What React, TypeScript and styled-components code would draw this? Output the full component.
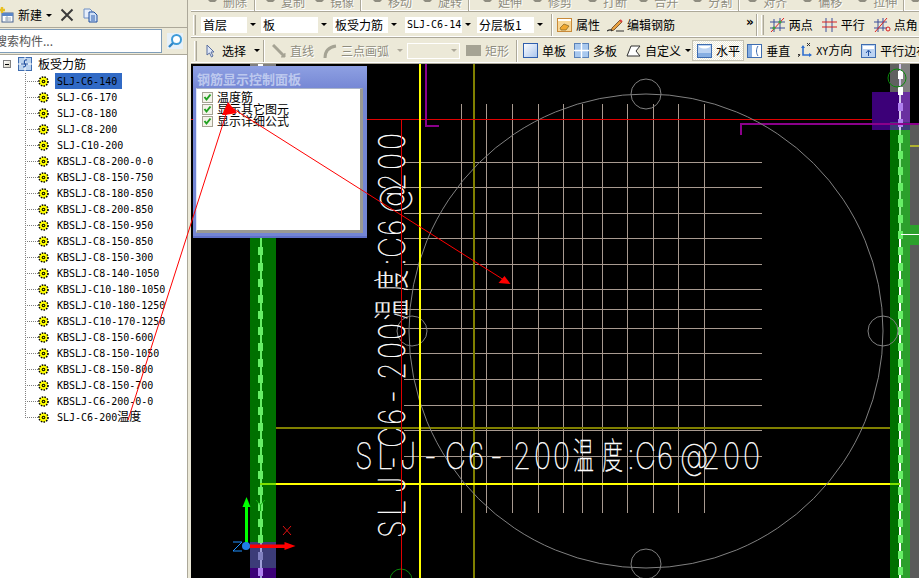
import React from 'react';
import styled, { createGlobalStyle } from 'styled-components';

const GlobalStyle = createGlobalStyle`
	html, body {
		margin: 0;
		padding: 0;
		background: #ece9d8;
		overflow: hidden;
	}
	* {
		box-sizing: border-box;
	}
`;

const UI_FONT = `"Noto Sans CJK SC", "Liberation Sans", sans-serif`;

const Page = styled.div`
	position: relative;
	display: flex;
	width: 919px;
	height: 578px;
	overflow: hidden;
	background: #ece9d8;
	font-family: ${UI_FONT};
	font-size: 12px;
	color: #000;
`;

/* left panel */
const SidePanel = styled.div`
	display: flex;
	flex-direction: column;
	width: 188px;
	border-right: 1px solid #aca899;
`;

const SideToolbar = styled.div`
	display: flex;
	align-items: center;
	height: 28px;
	padding-top: 3px;
	border-bottom: 1px solid #aca899;
	overflow: hidden;
`;

const SideLabel = styled.span`
	margin-left: 4px;
	font-size: 12px;
	line-height: 16px;
`;

const SearchRow = styled.div`
	display: flex;
	align-items: center;
	height: 27px;
	padding-bottom: 1px;
	border-bottom: 1px solid #aca899;
`;

const SearchBox = styled.div`
	width: 163px;
	height: 24px;
	margin-left: -1px;
	background: #fff;
	border: 1px solid #7f9db9;
	color: #555;
	font-size: 12px;
	line-height: 21px;
	white-space: nowrap;
	overflow: hidden;
`;

const SearchText = styled.span`
	display: block;
	margin-left: -5px;
`;

const SearchButton = styled.div`
	display: flex;
	margin-left: 5px;
`;

const Tree = styled.div`
	flex: 1;
	background: #fff;
	overflow: hidden;
`;

const RootRow = styled.div`
	display: flex;
	align-items: center;
	height: 18px;
	padding-left: 3px;
`;

const Expander = styled.span`
	display: flex;
	align-items: center;
	justify-content: center;
	width: 8px;
	height: 8px;
	border: 1px solid #808080;
	background: linear-gradient(135deg, #fff, #d8d4c4);
`;

const MinusMark = styled.span`
	width: 4px;
	height: 1px;
	background: #000;
`;

const RootIcon = styled.span`
	display: flex;
	margin-left: 7px;
`;

const RootLabel = styled.span`
	margin-left: 6px;
	font-size: 12px;
	line-height: 16px;
`;

const ItemList = styled.div`
	margin-left: 25px;
`;

const ItemRow = styled.div`
	display: flex;
	align-items: center;
	height: 16px;
`;

const Connector = styled.span<{ $last?: boolean }>`
	width: 13px;
	height: 16px;
	background:
		repeating-linear-gradient(to bottom, #808080 0 1px, transparent 1px 2px) 0 0 / 1px ${(p) => (p.$last ? 8 : 16)}px no-repeat,
		repeating-linear-gradient(to right, #808080 0 1px, transparent 1px 2px) 0 8px / 13px 1px no-repeat;
`;

const GearBox = styled.span`
	display: flex;
	width: 17px;
`;

const ItemLabel = styled.span<{ $selected?: boolean }>`
	height: 16px;
	padding: 0 5px 0 2px;
	background: ${(p) => (p.$selected ? '#316ac5' : 'transparent')};
	font-family: "DejaVu Sans Mono", "Noto Sans CJK SC", monospace;
	font-size: 10px;
	line-height: 17px;
	white-space: nowrap;
`;

const CjkPart = styled.span`
	font-family: ${UI_FONT};
	font-size: 12px;
	line-height: 0;
`;

const Splitter = styled.div`
	width: 3px;
	background: #ece9d8;
`;

/* right side */
const Main = styled.div`
	display: flex;
	flex: 1;
	flex-direction: column;
	min-width: 0;
`;

const ToolRow = styled.div<{ $height: number; $end?: boolean }>`
	display: flex;
	flex: none;
	align-items: ${(p) => (p.$end ? 'flex-end' : 'center')};
	height: ${(p) => p.$height}px;
	border-bottom: 1px solid #aca899;
	box-shadow: inset 0 -1px 0 #fff;
	overflow: hidden;
	white-space: nowrap;
`;

const Grip = styled.span<{ $ml: number }>`
	flex: none;
	width: 3px;
	height: 20px;
	margin-left: ${(p) => p.$ml}px;
	border-left: 1px solid #fff;
	border-right: 1px solid #aca899;
	background: #d8d4c4;
`;

const Sep = styled.span<{ $ml: number; $h?: number }>`
	flex: none;
	width: 2px;
	height: ${(p) => p.$h ?? 22}px;
	margin-left: ${(p) => p.$ml}px;
	border-left: 1px solid #aca899;
	border-right: 1px solid #fff;
`;

const Combo = styled.div<{ $ml: number; $w: number; $disabled?: boolean }>`
	display: flex;
	flex: none;
	width: ${(p) => p.$w}px;
	height: 16px;
	margin-left: ${(p) => p.$ml}px;
	background: ${(p) => (p.$disabled ? '#ece9d8' : '#fff')};
	border: ${(p) => (p.$disabled ? '1px solid #fff' : 'none')};
`;

const ComboText = styled.span`
	flex: 1;
	min-width: 0;
	padding-left: 2px;
	font-size: 12px;
	line-height: 16px;
	overflow: hidden;
`;

const ComboCode = styled(ComboText)`
	font-family: "DejaVu Sans Mono", monospace;
	font-size: 10px;
`;

const ComboArrow = styled.span`
	display: flex;
	flex: none;
	align-items: center;
	justify-content: center;
	width: 11px;
	background: #ece9d8;
`;

const Caret = styled.span<{ $ml?: number; $muted?: boolean }>`
	flex: none;
	width: 0;
	height: 0;
	margin-left: ${(p) => p.$ml ?? 0}px;
	border-top: 3px solid ${(p) => (p.$muted ? '#aca899' : '#000')};
	border-left: 3px solid transparent;
	border-right: 3px solid transparent;
`;

const Tool = styled.span<{ $ml: number; $gap?: number; $disabled?: boolean; $active?: boolean }>`
	display: flex;
	flex: none;
	align-items: center;
	gap: ${(p) => p.$gap ?? 4}px;
	margin-left: ${(p) => p.$ml}px;
	height: ${(p) => (p.$active ? '21px' : 'auto')};
	padding: ${(p) => (p.$active ? '0 3px 0 4px' : '0')};
	border: ${(p) => (p.$active ? '1px solid #c4c1b2' : 'none')};
	background: ${(p) => (p.$active ? 'repeating-conic-gradient(#fff 0 25%, #ece9d8 0 50%) 0 0 / 2px 2px' : 'none')};
	color: ${(p) => (p.$disabled ? '#8f8d80' : '#000')};
	text-shadow: ${(p) => (p.$disabled ? '1px 1px 0 #fff' : 'none')};
	font-size: 12px;
	line-height: 16px;
`;

const CutTool = styled(Tool)`
	height: 16px;
	margin-bottom: 1px;
`;

const Chevrons = styled.span<{ $ml: number }>`
	flex: none;
	margin-left: ${(p) => p.$ml}px;
	margin-top: -5px;
	font-family: "DejaVu Sans", sans-serif;
	font-size: 12px;
	font-weight: bold;
`;

const CodeLabel = styled.span`
	font-family: "DejaVu Sans Mono", monospace;
	font-size: 10px;
`;

/* canvas */
const Canvas = styled.div`
	position: relative;
	flex: 1;
	min-height: 0;
	background: #000;
	overflow: hidden;
`;

const Drawing = styled.svg`
	display: block;
	width: 728px;
	height: 514px;
`;

const CadLetters = styled.text`
	font-family: Inter, "Noto Sans CJK SC", sans-serif;
	font-size: 36px;
	font-weight: 100;
	fill: #fff;
	stroke: #fff;
	stroke-width: 0.5px;
`;

const ControlWindow = styled.div`
	position: absolute;
	left: 2px;
	top: 2px;
	display: flex;
	flex-direction: column;
	width: 174px;
	height: 172px;
	padding: 3px;
	background: linear-gradient(to bottom, #8ea0e2, #7486d4 24px, #7486d4);
	border-bottom: 2px solid #5f70c8;
`;

const WindowTitle = styled.div`
	flex: none;
	height: 19px;
	padding-left: 1px;
	color: #bcc8ee;
	font-size: 13px;
	font-weight: bold;
	line-height: 19px;
	white-space: nowrap;
`;

const CheckList = styled.div`
	flex: 1;
	margin-right: 1px;
	padding: 2px 0 0 5px;
	background: #fff;
	border-top: 1px solid #aab4c8;
	border-left: 1px solid #dfe6fa;
	border-right: 3px solid #9a9a94;
	border-bottom: 3px solid #9a9a94;
`;

const CheckRow = styled.div`
	display: flex;
	align-items: center;
	height: 12px;
	font-size: 12px;
	line-height: 12px;
	white-space: nowrap;
`;

const CheckBoxMark = styled.span`
	display: flex;
	flex: none;
	width: 11px;
	height: 11px;
	margin-right: 4px;
	background: #f4f3ea;
	border: 1px solid #a6a393;
`;

const Annotations = styled.svg`
	position: absolute;
	left: 0;
	top: 0;
	width: 919px;
	height: 578px;
	pointer-events: none;
`;

/* icons */
const NewIcon = () => (
	<svg width="15" height="16" viewBox="0 0 15 16" style={{ marginLeft: -1 }}>
		<rect x="3" y="6" width="11" height="9" fill="#fff" stroke="#47628f" />
		<rect x="3" y="6" width="11" height="3" fill="#5a86c8" />
		<path d="M6 11h6M6 13h6M8 9v6" stroke="#9ab" />
		<path d="M3 0v6M0 3h6" stroke="#e8c020" strokeWidth="2.4" />
	</svg>
);

const CrossIcon = () => (
	<svg width="14" height="14" viewBox="0 0 14 14" style={{ marginLeft: 8 }}>
		<path d="M1.500 1.500l11 11M12.500 1.500l-11 11" stroke="#3a3a3a" strokeWidth="2" />
	</svg>
);

const CopyIcon = () => (
	<svg width="16" height="15" viewBox="0 0 16 15" style={{ marginLeft: 9 }}>
		<path d="M1 1h6l2 2v7H1z" fill="#e6eefb" stroke="#6f8fc4" />
		<path d="M6 4h5l3 3v7H6z" fill="#cfe0f7" stroke="#1f4f9f" />
		<path d="M8 8h4M8 10h4M8 12h4" stroke="#2f5fae" />
	</svg>
);

const MagnifierIcon = () => (
	<svg width="16" height="16" viewBox="0 0 16 16">
		<rect width="16" height="16" fill="#e6f0f8" />
		<circle cx="9.500" cy="6.500" r="4.500" fill="#fff" stroke="#3e9bd8" strokeWidth="2" />
		<path d="M6 10l-4 4" stroke="#2f86c8" strokeWidth="2.400" />
	</svg>
);

const RootGlyph = () => (
	<svg width="14" height="14" viewBox="0 0 14 14">
		<rect x="0.500" y="0.500" width="13" height="13" fill="#bcd3ee" stroke="#3f6db0" />
		<path d="M0 7h14M7 0v14" stroke="#fff" strokeWidth="1" />
		<path d="M9 3c-3-1-3 3-2 4s1 3-2 3" fill="none" stroke="#1f4f9f" strokeWidth="1.200" />
		<path d="M3 7h7" stroke="#1f4f9f" />
	</svg>
);

const GearIcon = () => (
	<svg width="11" height="11" viewBox="0 0 11 11">
		<circle cx="5.500" cy="5.500" r="4.500" fill="#ff0" stroke="#000" strokeWidth="1.600" strokeDasharray="1.500 1.200" />
		<circle cx="5.500" cy="5.500" r="3.400" fill="#ff0" />
		<circle cx="5.500" cy="5.500" r="1.800" fill="#000" />
		<circle cx="5.500" cy="5.500" r="0.800" fill="#ff0" />
	</svg>
);

const GreyBlock = () => (
	<svg width="15" height="16" viewBox="0 0 15 16">
		<path d="M2 0h11v5l-3 3H5L2 5z" fill="#8f8d80" />
	</svg>
);

const PropertyIcon = () => (
	<svg width="15" height="16" viewBox="0 0 15 16">
		<rect x="0.500" y="1.500" width="14" height="13" fill="#f8d898" stroke="#c88a3a" />
		<rect x="1" y="2" width="13" height="2" fill="#fff" />
		<path d="M3 11l4-4 5 2-3 4H4z" fill="#f0a830" stroke="#806020" strokeWidth="0.700" />
	</svg>
);

const PencilIcon = () => (
	<svg width="17" height="16" viewBox="0 0 17 16">
		<path d="M5 11l8-8 2 2-8 8-3 1z" fill="#e8a040" stroke="#604020" strokeWidth="0.800" />
		<path d="M13 3l2 2" stroke="#d84040" strokeWidth="2" />
		<path d="M0 14c3-2 5-1 5 0M9 14h8" fill="none" stroke="#303030" strokeWidth="1.200" />
	</svg>
);

const TwoPointIcon = () => (
	<svg width="15" height="16" viewBox="0 0 15 16">
		<path d="M4 2v13M10 1v13M0 5h15M0 11h15" stroke="#3a4f9a" />
		<path d="M1 15L14 1" stroke="#e02020" />
		<circle cx="4" cy="11" r="1.600" fill="#40a040" />
		<circle cx="10" cy="5" r="1.600" fill="#40a040" />
	</svg>
);

const ParallelIcon = () => (
	<svg width="15" height="16" viewBox="0 0 15 16">
		<path d="M4 1v14M10 1v14" stroke="#3a4f9a" />
		<path d="M0 5h15M0 10h15" stroke="#d82020" />
	</svg>
);

const AngleIcon = () => (
	<svg width="17" height="16" viewBox="0 0 17 16">
		<path d="M4 2v13M9 1v13M0 5h13M0 11h13" stroke="#3a4f9a" />
		<path d="M1 15L13 1" stroke="#e02020" />
		<circle cx="14" cy="12" r="2" fill="none" stroke="#d82020" />
	</svg>
);

const PointerIcon = () => (
	<svg width="9" height="14" viewBox="0 0 9 14">
		<path d="M1 1v10l2.500-2 2 4 1.500-1-2-4h3z" fill="#dfe8f8" stroke="#5a6f9f" />
	</svg>
);

const LineIcon = () => (
	<svg width="14" height="14" viewBox="0 0 14 14">
		<path d="M1 1l11 11" stroke="#a5a394" strokeWidth="3" />
		<path d="M9 13h4V9" fill="#a5a394" stroke="#a5a394" />
	</svg>
);

const ArcIcon = () => (
	<svg width="14" height="14" viewBox="0 0 14 14">
		<path d="M2 14C2 7 6 3 13 2" fill="none" stroke="#a5a394" strokeWidth="3" />
	</svg>
);

const RectIcon = () => (
	<svg width="16" height="12" viewBox="0 0 16 12">
		<rect width="15" height="11" fill="#a5a394" />
	</svg>
);

const PlateIcon = () => (
	<svg width="15" height="15" viewBox="0 0 15 15">
		<defs>
			<linearGradient id="plate" x1="0" y1="0" x2="1" y2="1">
				<stop offset="0" stopColor="#fff" />
				<stop offset="1" stopColor="#a8c4ec" />
			</linearGradient>
		</defs>
		<rect x="0.500" y="0.500" width="14" height="14" fill="url(#plate)" stroke="#2f5fae" />
	</svg>
);

const MultiPlateIcon = () => (
	<svg width="15" height="15" viewBox="0 0 15 15">
		<rect x="0.500" y="0.500" width="14" height="14" fill="#a8c8ee" stroke="#5a82b8" />
		<path d="M7.500 0v15M0 7.500h15" stroke="#fff" strokeWidth="1.400" />
	</svg>
);

const CustomIcon = () => (
	<svg width="15" height="14" viewBox="0 0 15 14">
		<path d="M5 2h9l-4 5 4 5H1z" fill="#fff" stroke="#303030" />
	</svg>
);

const HorizontalIcon = () => (
	<svg width="15" height="16" viewBox="0 0 15 16">
		<rect x="0.500" y="1.500" width="14" height="13" fill="#bcd3f2" stroke="#3f6db0" />
		<path d="M2 4c4 2 7 2 11 0v-1H2z" fill="#fff" />
		<rect x="1" y="10" width="13" height="4" fill="#86aee2" />
	</svg>
);

const VerticalIcon = () => (
	<svg width="15" height="16" viewBox="0 0 15 16">
		<rect x="0.500" y="1.500" width="14" height="13" fill="#fff" stroke="#3f6db0" />
		<rect x="1" y="2" width="4" height="12" fill="#86aee2" />
		<path d="M11 3c-2 3-2 7 0 10" fill="none" stroke="#3f6db0" />
	</svg>
);

const AxisIcon = () => (
	<svg width="15" height="16" viewBox="0 0 15 16">
		<path d="M5 3v9h8" fill="none" stroke="#2f6fd0" strokeWidth="1.600" />
		<path d="M3 5l2-3 2 3zM11 10l3 2-3 2z" fill="#2f6fd0" />
		<path d="M9 0l3 3M12 0l-3 3" stroke="#303030" />
		<path d="M0 11l2 2M2 11l-2 3" stroke="#303030" />
	</svg>
);

const EdgeIcon = () => (
	<svg width="15" height="16" viewBox="0 0 15 16">
		<rect x="0.500" y="1.500" width="14" height="13" fill="#bcd3f2" stroke="#3f6db0" />
		<rect x="2" y="3" width="11" height="3" fill="#fff" />
		<path d="M7.500 13V8M5 10l2.500-3 2.500 3" fill="none" stroke="#1f4f9f" />
	</svg>
);

const Tick = () => (
	<svg width="9" height="9" viewBox="0 0 9 9">
		<path d="M1.500 4l2 2.500L7.500 1.500" fill="none" stroke="#21a121" strokeWidth="2" />
	</svg>
);

/* data */
const treeItems = [
	'SLJ-C6-140',
	'SLJ-C6-170',
	'SLJ-C8-180',
	'SLJ-C8-200',
	'SLJ-C10-200',
	'KBSLJ-C8-200-0-0',
	'KBSLJ-C8-150-750',
	'KBSLJ-C8-180-850',
	'KBSLJ-C8-200-850',
	'KBSLJ-C8-150-950',
	'KBSLJ-C8-150-850',
	'KBSLJ-C8-150-300',
	'KBSLJ-C8-140-1050',
	'KBSLJ-C10-180-1050',
	'KBSLJ-C10-180-1250',
	'KBSLJ-C10-170-1250',
	'KBSLJ-C8-150-600',
	'KBSLJ-C8-150-1050',
	'KBSLJ-C8-150-800',
	'KBSLJ-C8-150-700',
	'KBSLJ-C6-200-0-0',
];

const editTools: { label?: string; ml: number; sep?: boolean }[] = [
	{ label: '删除', ml: 14 },
	{ sep: true, ml: 7 },
	{ label: '复制', ml: 7 },
	{ label: '镜像', ml: 7 },
	{ sep: true, ml: 6 },
	{ label: '移动', ml: 8 },
	{ label: '旋转', ml: 8 },
	{ sep: true, ml: 6 },
	{ label: '延伸', ml: 10 },
	{ label: '修剪', ml: 8 },
	{ label: '打断', ml: 13 },
	{ label: '合并', ml: 9 },
	{ label: '分割', ml: 12 },
	{ sep: true, ml: 6 },
	{ label: '对齐', ml: 5 },
	{ label: '偏移', ml: 13 },
	{ label: '拉伸', ml: 13 },
	{ sep: true, ml: 6 },
	{ ml: 3 },
];

const gridX = [461.5, 486.5, 512.5, 538.5, 563.5, 582.5, 602.5, 627.5, 653.5, 678.5, 704.5];
const gridY = [162.5, 187.5, 213.5, 238.5, 264.5, 289.5, 309.5, 328.5, 353.5, 379.5, 405.5, 430.5, 456.5];

// the label's latin characters and its two CJK ones are stretched differently
const LATIN_SCALE = 0.8;
const CJK_SCALE = 0.58;
const latinChars = 'SLJ-C6-200:C6@200';
const latinX = [355, 377, 400, 424, 445, 468, 490, 513, 534, 553, 627, 635, 657, 680, 702, 723, 743];
const cjkChars = '温度';
const cjkX = [573, 602];
const toAttr = (xs: number[], scale: number) => xs.map((x) => (x / scale).toFixed(1)).join(' ');

const dashes = (x: number, from: number, to: number, color: string) => {
	const out: React.ReactElement[] = [];
	for (let y = from; y < to; y += 16) {
		out.push(<rect key={`${x}-${y}`} x={x} y={y} width={5} height={8} fill={color} />);
	}
	return out;
};

const CadLabel = ({ transform }: { transform?: string }) => (
	<g transform={transform}>
		<g transform={`translate(0 469) scale(${LATIN_SCALE} 1)`}>
			<CadLetters x={toAttr(latinX, LATIN_SCALE)} y={0}>
				{latinChars}
			</CadLetters>
		</g>
		<g transform={`translate(0 469) scale(${CJK_SCALE} 1)`}>
			<CadLetters x={toAttr(cjkX, CJK_SCALE)} y={0}>
				{cjkChars}
			</CadLetters>
		</g>
	</g>
);

const CadDrawing = () => (
	<Drawing viewBox="191 64 728 514">
		<g shapeRendering="crispEdges">
			{/* left column */}
			<rect x={250} y={64} width={26} height={2} fill="#808080" />
			<rect x={250} y={238} width={26} height={304} fill="#007000" />
			<rect x={250} y={542} width={26} height={26} fill="#3c3c78" />
			<rect x={250} y={568} width={26} height={10} fill="#3c0078" />
			<rect x={260} y={238} width={2} height={304} fill="#66ee66" />
			<rect x={260} y={542} width={2} height={36} fill="#a0a0d8" />
			{dashes(258, 247, 540, '#66ee66')}
			<rect x={258} y={552} width={5} height={8} fill="#8080c0" />
			<rect x={258} y={568} width={5} height={8} fill="#b080f0" />
			<rect x={258} y={64} width={5} height={2} fill="#fff" />

			{/* right column */}
			<rect x={890} y={64} width={10} height={28} fill="#606060" />
			<rect x={900} y={64} width={10} height={28} fill="#808080" />
			<rect x={910} y={125} width={9} height={453} fill="#5a5a5a" />
			<rect x={872} y={92} width={28} height={38} fill="#3c0078" />
			<rect x={900} y={92} width={10} height={38} fill="#6a30a0" />
			<rect x={890} y={122} width={20} height={8} fill="#3c3c78" />
			<rect x={890} y={130} width={9} height={448} fill="#007000" />
			<rect x={901} y={130} width={9} height={448} fill="#2ca02c" />
			<rect x={899} y={130} width={2} height={104} fill="#90ee90" />
			<rect x={899} y={64} width={2} height={66} fill="#d8c8f0" />
			<rect x={899} y={234} width={2} height={344} fill="#fff" />
			{dashes(898, 71, 92, '#fff')}
			{dashes(898, 103, 120, '#b080f0')}
			{dashes(898, 135, 578, '#66ee66')}
			<rect x={910} y={225} width={9} height={20} fill="#2ca02c" />
			<rect x={901} y={234} width={18} height={1} fill="#fff" />
			<rect x={910} y={145} width={9} height={2} fill="#b0b030" />
			<rect x={740} y={123} width={179} height={2} fill="#8b008b" />
			<rect x={740} y={123} width={2} height={12} fill="#8b008b" />

			{/* grid */}
			{gridY.map((y) => (
				<line key={y} x1={404} x2={762} y1={y} y2={y} stroke="#a89a90" />
			))}
			{gridX.map((x) => (
				<line key={x} x1={x} x2={x} y1={104} y2={513} stroke="#a89a90" />
			))}

			{/* axes */}
			<rect x={276} y={427} width={614} height={2} fill="#808000" />
			<rect x={473} y={64} width={2} height={514} fill="#808000" />
			<rect x={367} y={119} width={505} height={1} fill="#e00000" />
			<rect x={191} y={119} width={2} height={1} fill="#e00000" />
			<rect x={425} y={64} width={2} height={62} fill="#8b008b" />
			<rect x={425} y={125} width={14} height={2} fill="#8b008b" />
			<rect x={260} y={483} width={16} height={2} fill="#7fe000" />
			<rect x={276} y={483} width={614} height={2} fill="#ff0" />
			<rect x={890} y={483} width={10} height={2} fill="#7fe000" />
		</g>

		{/* circles */}
		<g fill="none" stroke="#808080">
			<circle cx={646} cy={331} r={237} />
			<circle cx={646} cy={94} r={15} />
			<circle cx={412} cy={331} r={15} />
			<circle cx={883} cy={331} r={15} />
			<circle cx={646} cy={564} r={15} />
		</g>
		<circle cx={401} cy={580} r={11} fill="none" stroke="#0a8a0a" />
		<circle cx={897} cy={78} r={9} fill="none" stroke="#0a8a0a" />

		<CadLabel />
		<CadLabel transform="translate(405 538) rotate(-90) translate(-355 -469)" />

		<g shapeRendering="crispEdges">
			<rect x={419} y={64} width={2} height={514} fill="#ff0" />
			<rect x={401} y={120} width={1} height={458} fill="#e00000" />
		</g>

		{/* UCS marker */}
		<rect x={245} y={505} width={3} height={41} fill="#00ff00" />
		<path d="M246.500 497l4 10h-8z" fill="#00ff00" />
		<path d="M256 500l4.500 5 4.500-5M260.500 505v6" fill="none" stroke="#10b010" />
		<rect x={246} y={544.5} width={40} height={3.5} fill="#ff0000" />
		<path d="M295.500 546l-11 4v-8z" fill="#ff0000" />
		<path d="M283 526l8 9M291 526l-8 9" stroke="#e01010" />
		<path d="M233 542h9l-9 9h9" fill="none" stroke="#1e90ff" />
		<circle cx={246} cy={546} r={4} fill="#1e7de8" />
	</Drawing>
);

const RedArrows = () => (
	<Annotations viewBox="0 0 919 578">
		<path d="M128 420L229 105" stroke="#f00" fill="none" />
		<path d="M232 108L504 280" stroke="#f00" fill="none" />
		<path d="M228 102l9 11-12 2-3 0z" fill="#f00" />
		<path d="M510.500 284l-12-1 6-7z" fill="#f00" />
	</Annotations>
);

const editIconless = (i: number) => i === editTools.length - 1;

export default function App() {
	return (
		<Page>
			<GlobalStyle />
			<SidePanel>
				<SideToolbar>
					<NewIcon />
					<SideLabel>新建</SideLabel>
					<Caret $ml={4} />
					<CrossIcon />
					<CopyIcon />
				</SideToolbar>
				<SearchRow>
					<SearchBox>
						<SearchText>搜索构件...</SearchText>
					</SearchBox>
					<SearchButton>
						<MagnifierIcon />
					</SearchButton>
				</SearchRow>
				<Tree>
					<RootRow>
						<Expander>
							<MinusMark />
						</Expander>
						<RootIcon>
							<RootGlyph />
						</RootIcon>
						<RootLabel>板受力筋</RootLabel>
					</RootRow>
					<ItemList>
						{treeItems.map((item, i) => (
							<ItemRow key={item}>
								<Connector />
								<GearBox>
									<GearIcon />
								</GearBox>
								<ItemLabel $selected={i === 0}>{item}</ItemLabel>
							</ItemRow>
						))}
						<ItemRow>
							<Connector $last />
							<GearBox>
								<GearIcon />
							</GearBox>
							<ItemLabel>
								SLJ-C6-200<CjkPart>温度</CjkPart>
							</ItemLabel>
						</ItemRow>
					</ItemList>
				</Tree>
			</SidePanel>
			<Splitter />
			<Main>
				<ToolRow $height={12} $end>
					{editTools.map((t, i) =>
						t.sep ? (
							<Sep key={i} $ml={t.ml} $h={12} />
						) : (
							<CutTool key={i} $ml={t.ml} $gap={3} $disabled>
								<GreyBlock />
								{!editIconless(i) && t.label}
							</CutTool>
						),
					)}
				</ToolRow>
				<ToolRow $height={26}>
					<Grip $ml={2} />
					<Combo $ml={5} $w={57}>
						<ComboText>首层</ComboText>
						<ComboArrow>
							<Caret />
						</ComboArrow>
					</Combo>
					<Combo $ml={3} $w={68}>
						<ComboText>板</ComboText>
						<ComboArrow>
							<Caret />
						</ComboArrow>
					</Combo>
					<Combo $ml={4} $w={66}>
						<ComboText>板受力筋</ComboText>
						<ComboArrow>
							<Caret />
						</ComboArrow>
					</Combo>
					<Combo $ml={6} $w={68}>
						<ComboCode>SLJ-C6-14</ComboCode>
						<ComboArrow>
							<Caret />
						</ComboArrow>
					</Combo>
					<Combo $ml={4} $w={68}>
						<ComboText>分层板1</ComboText>
						<ComboArrow>
							<Caret />
						</ComboArrow>
					</Combo>
					<Sep $ml={6} />
					<Tool $ml={4}>
						<PropertyIcon />
						属性
					</Tool>
					<Tool $ml={7} $gap={3}>
						<PencilIcon />
						编辑钢筋
					</Tool>
					<Chevrons $ml={71}>»</Chevrons>
					<Sep $ml={2} />
					<Grip $ml={3} />
					<Tool $ml={6}>
						<TwoPointIcon />
						两点
					</Tool>
					<Tool $ml={9}>
						<ParallelIcon />
						平行
					</Tool>
					<Tool $ml={9} $gap={3}>
						<AngleIcon />
						点角
					</Tool>
				</ToolRow>
				<ToolRow $height={26}>
					<Grip $ml={3} />
					<Tool $ml={9} $gap={7}>
						<PointerIcon />
						选择
					</Tool>
					<Caret $ml={8} />
					<Sep $ml={3} />
					<Tool $ml={7} $disabled>
						<LineIcon />
						直线
					</Tool>
					<Tool $ml={9} $disabled>
						<ArcIcon />
						三点画弧
					</Tool>
					<Caret $ml={8} $muted />
					<Combo $ml={4} $w={53} $disabled>
						<ComboText />
						<ComboArrow>
							<Caret $muted />
						</ComboArrow>
					</Combo>
					<Tool $ml={6} $gap={3} $disabled>
						<RectIcon />
						矩形
					</Tool>
					<Sep $ml={7} />
					<Tool $ml={5}>
						<PlateIcon />
						单板
					</Tool>
					<Tool $ml={8}>
						<MultiPlateIcon />
						多板
					</Tool>
					<Tool $ml={9}>
						<CustomIcon />
						自定义
					</Tool>
					<Caret $ml={4} />
					<Tool $ml={1} $active>
						<HorizontalIcon />
						水平
					</Tool>
					<Tool $ml={3}>
						<VerticalIcon />
						垂直
					</Tool>
					<Tool $ml={8} $gap={3}>
						<AxisIcon />
						<span>
							<CodeLabel>XY</CodeLabel>方向
						</span>
					</Tool>
					<Tool $ml={9}>
						<EdgeIcon />
						平行边布
					</Tool>
				</ToolRow>
				<Canvas>
					<CadDrawing />
					<ControlWindow>
						<WindowTitle>钢筋显示控制面板</WindowTitle>
						<CheckList>
							{['温度筋', '显示其它图元', '显示详细公式'].map((label) => (
								<CheckRow key={label}>
									<CheckBoxMark>
										<Tick />
									</CheckBoxMark>
									{label}
								</CheckRow>
							))}
						</CheckList>
					</ControlWindow>
				</Canvas>
			</Main>
			<RedArrows />
		</Page>
	);
}
